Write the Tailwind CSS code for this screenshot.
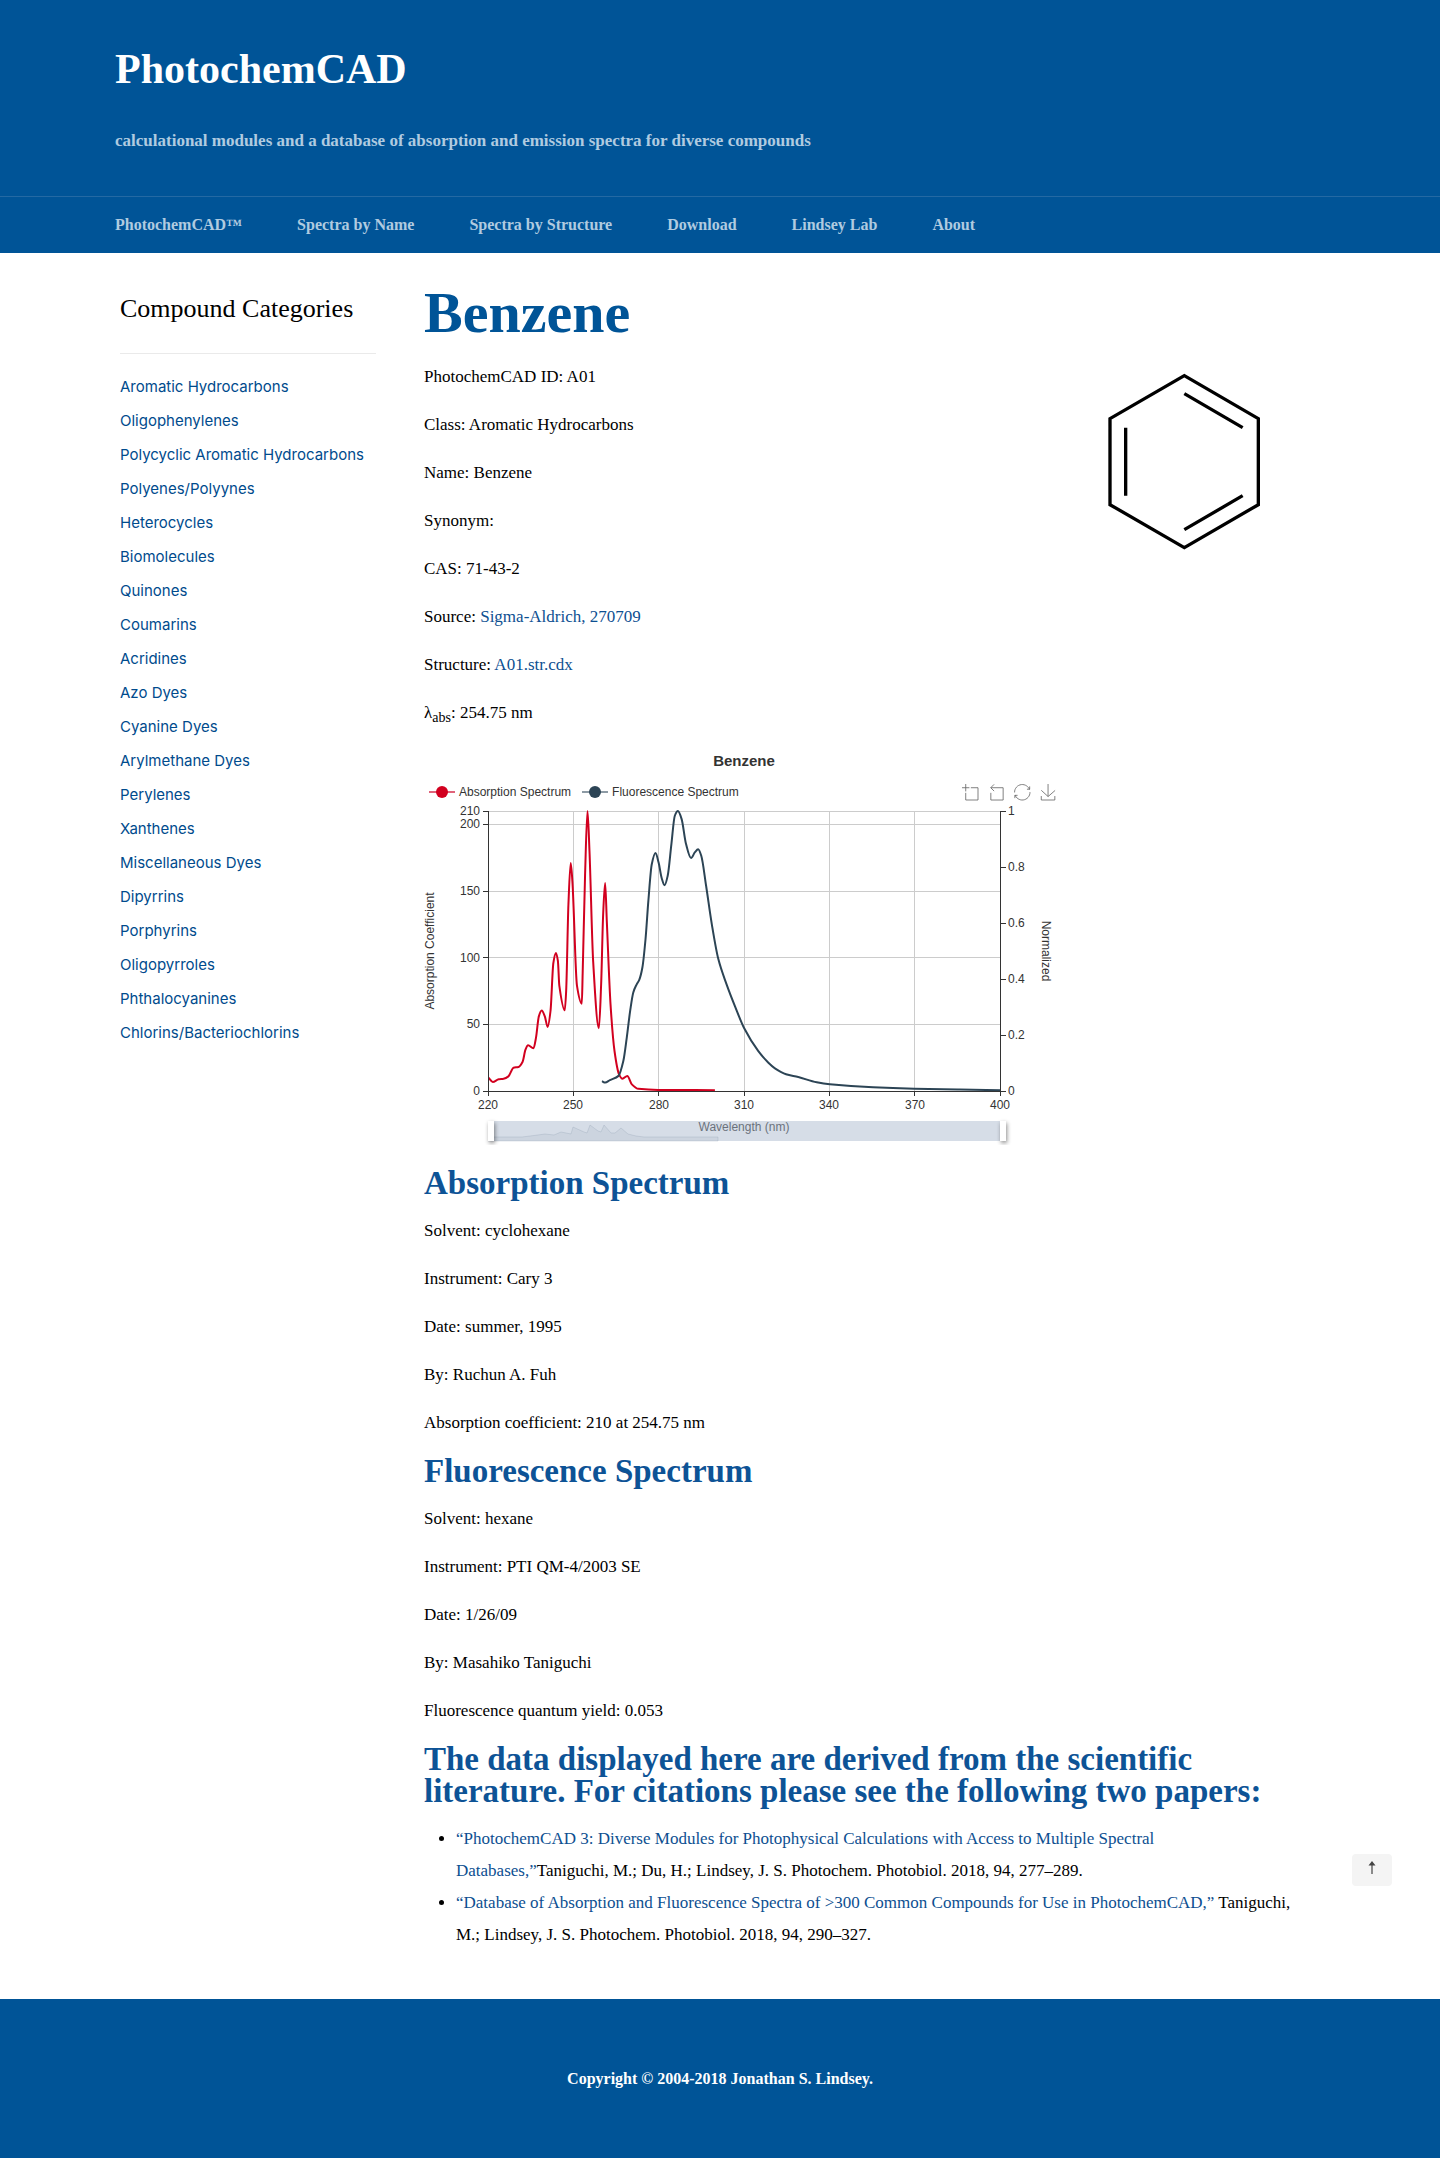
<!DOCTYPE html>
<html lang="en">
<head>
<meta charset="utf-8">
<meta name="viewport" content="width=device-width, initial-scale=1">
<title>Benzene | PhotochemCAD</title>
<script src="https://cdn.jsdelivr.net/npm/@tailwindcss/browser@4"></script>
</head>
<body class="bg-white font-['Liberation_Serif',serif] text-[17px] leading-8 text-black">

<header class="bg-[#005497]">
  <div class="mx-auto max-w-[1210px] pt-[45px] pb-[43px]">
    <a href="#" class="block text-[42px] leading-[48px] font-bold text-white">PhotochemCAD</a>
    <p class="mt-9 text-[17px] leading-6 font-bold text-[#b0cbe0]">calculational modules and a database of absorption and emission spectra for diverse compounds</p>
  </div>
  <nav class="border-t border-[#2469a3]">
    <div class="mx-auto flex max-w-[1210px] gap-[55px] text-base leading-[56px] font-bold text-[#b0cbe0]">
      <a href="#">PhotochemCAD™</a>
      <a href="#">Spectra by Name</a>
      <a href="#">Spectra by Structure</a>
      <a href="#">Download</a>
      <a href="#">Lindsey Lab</a>
      <a href="#">About</a>
    </div>
  </nav>
</header>

<div class="mx-auto flex max-w-[1210px] gap-12 pb-12">
  <aside class="w-[261px] shrink-0 pt-10 pl-[5px]">
    <h2 class="border-b border-[#eaeaea] pb-7 text-[26px] leading-8">Compound Categories</h2>
    <ul class="mt-4 font-[Inter,sans-serif] text-[15px] leading-[34px] whitespace-nowrap text-[#004b8d]">
      <li><a href="#">Aromatic Hydrocarbons</a></li>
      <li><a href="#">Oligophenylenes</a></li>
      <li><a href="#">Polycyclic Aromatic Hydrocarbons</a></li>
      <li><a href="#">Polyenes/Polyynes</a></li>
      <li><a href="#">Heterocycles</a></li>
      <li><a href="#">Biomolecules</a></li>
      <li><a href="#">Quinones</a></li>
      <li><a href="#">Coumarins</a></li>
      <li><a href="#">Acridines</a></li>
      <li><a href="#">Azo Dyes</a></li>
      <li><a href="#">Cyanine Dyes</a></li>
      <li><a href="#">Arylmethane Dyes</a></li>
      <li><a href="#">Perylenes</a></li>
      <li><a href="#">Xanthenes</a></li>
      <li><a href="#">Miscellaneous Dyes</a></li>
      <li><a href="#">Dipyrrins</a></li>
      <li><a href="#">Porphyrins</a></li>
      <li><a href="#">Oligopyrroles</a></li>
      <li><a href="#">Phthalocyanines</a></li>
      <li><a href="#">Chlorins/Bacteriochlorins</a></li>
    </ul>
  </aside>

  <main class="min-w-0 flex-1 pt-7">
    <h1 class="mb-4 text-[58px] leading-[64px] font-bold text-[#005497]">Benzene</h1>
    <div class="flex items-start justify-between">
      <div class="flex flex-col gap-4">
        <p>PhotochemCAD ID: A01</p>
        <p>Class: Aromatic Hydrocarbons</p>
        <p>Name: Benzene</p>
        <p>Synonym:</p>
        <p>CAS: 71-43-2</p>
        <p>Source: <a href="#" class="text-[#0d4f91]">Sigma-Aldrich, 270709</a></p>
        <p>Structure: <a href="#" class="text-[#0d4f91]">A01.str.cdx</a></p>
        <p>λ<sub class="text-sm">abs</sub>: 254.75 nm</p>
      </div>
      <svg class="mr-[45px]" width="200" height="210" viewBox="0 30 600 630" fill="none" stroke="#000" stroke-width="10" role="img" aria-label="Structure of benzene">
        <path d="M313 74L535 203V461L313 590L90 461V203ZM137 230V434M313 128L488 230M313 536L488 434"/>
      </svg>
    </div>

    <section class="mt-4 w-[640px] pb-[22px] font-['Liberation_Sans',sans-serif] text-xs text-[#333]">
      <h3 class="pt-[6px] text-center text-[15px] leading-5 font-bold">Benzene</h3>
      <div class="mt-[11px] flex h-5 items-center justify-between pr-2 pl-[5px] leading-5">
        <div class="flex gap-[11px]">
          <span class="flex items-center gap-1"><svg width="26" height="14" aria-hidden="true"><path d="M0 7H26" stroke="#e0637a" stroke-width="2"/><circle cx="13" cy="7" r="6" fill="#d2001f"/></svg>Absorption Spectrum</span>
          <span class="flex items-center gap-1"><svg width="26" height="14" aria-hidden="true"><path d="M0 7H26" stroke="#8d9ba5" stroke-width="2"/><circle cx="13" cy="7" r="6" fill="#2c4455"/></svg>Fluorescence Spectrum</span>
        </div>
        <div class="flex gap-[10px]">
          <button type="button" aria-label="Zoom"><svg class="overflow-visible" width="16" height="16" viewBox="0 0 58 58" fill="none" stroke="#666" stroke-width="3"><path d="M0,13.5h26.9 M13.5,26.9V0 M32.1,13.5H58V58H13.5 V32.1"/></svg></button>
          <button type="button" aria-label="Reset zoom"><svg class="overflow-visible" width="16" height="16" viewBox="0 0 58 58" fill="none" stroke="#666" stroke-width="3"><path d="M22,1.4L9.9,13.5l12.3,12.3 M10.3,13.5H54.9v44.6 H10.3v-26"/></svg></button>
          <button type="button" aria-label="Restore"><svg class="overflow-visible" width="16" height="16" viewBox="0 0 58 58" fill="none" stroke="#666" stroke-width="3"><path d="M47,18.9h9.8V8.7 M56.3,20.1 C52.1,9,40.5,0.6,26.8,2.1C12.6,3.7,1.6,16.2,2.1,30.6 M13,41.1H3.1v10.2 M3.7,39.9c4.2,11.1,15.8,19.5,29.5,18 c14.2-1.6,25.2-14.1,24.7-28.5"/></svg></button>
          <button type="button" aria-label="Save as image"><svg class="overflow-visible" width="16" height="16" viewBox="0 0 58 58" fill="none" stroke="#666" stroke-width="3"><path d="M4.7,22.9L29.3,45.5L54.7,23.4M4.6,43.6L4.6,58L53.8,58L53.8,43.6M29.2,45.1L29.2,0"/></svg></button>
        </div>
      </div>
      <svg class="block" width="640" height="343" viewBox="0 57 640 343" fill="#333" role="img" aria-label="Absorption and fluorescence spectra of benzene">
        <path d="M64 66.5H576M64 79.5H576M64 146.5H576M64 212.5H576M64 279.5H576M149.500 66V346M234.500 66V346M320.500 66V346M405.500 66V346M490.500 66V346" stroke="#ccc"/>
        <path id="absorption" fill="none" stroke="#d2001f" stroke-width="2" stroke-linejoin="round"/>
        <path id="fluorescence" fill="none" stroke="#2c4455" stroke-width="2" stroke-linejoin="round"/>
        <path d="M64.500 66V351M576.500 66V351M64 346.500H577M59 66.500H64M59 79.500H64M59 146.500H64M59 212.500H64M59 279.500H64M59 346.500H64M577 66.500H582M577 122.500H582M577 178.500H582M577 234.500H582M577 290.500H582M577 346.500H582M149.500 346V351M234.500 346V351M320.500 346V351M405.500 346V351M490.500 346V351" fill="none" stroke="#333"/>
        <g text-anchor="end">
          <text x="56" y="70">210</text><text x="56" y="83">200</text><text x="56" y="150">150</text><text x="56" y="217">100</text><text x="56" y="283">50</text><text x="56" y="350">0</text>
        </g>
        <g>
          <text x="584" y="70">1</text><text x="584" y="126">0.8</text><text x="584" y="182">0.6</text><text x="584" y="238">0.4</text><text x="584" y="294">0.2</text><text x="584" y="350">0</text>
        </g>
        <g text-anchor="middle">
          <text x="64" y="364">220</text><text x="149" y="364">250</text><text x="235" y="364">280</text><text x="320" y="364">310</text><text x="405" y="364">340</text><text x="491" y="364">370</text><text x="576" y="364">400</text>
          <text x="320" y="386">Wavelength (nm)</text>
          <text transform="translate(10 206) rotate(-90)">Absorption Coefficient</text>
          <text transform="translate(618 206) rotate(90)">Normalized</text>
        </g>
        <rect x="64" y="376" width="512" height="20" fill="#a7b7cc" fill-opacity=".47"/>
        <path d="M68 392H98L110 390.500L121 389L130 390L137 387L147 389L149 382L160 387L163 388L166 380L174 386L177 387L180 380L187 388L191 388L197 383L204 389L212 391L220 392H294V396H64Z" fill="#8391a6" fill-opacity=".12" stroke="#8391a6" stroke-opacity=".3" stroke-width=".8"/>
        <g fill="#fff" class="drop-shadow-[1px_2px_2px_rgba(0,0,0,0.45)]"><rect x="64" y="376" width="6" height="20"/><rect x="576" y="376" width="6" height="20"/></g>
      </svg>
    </section>

    <h2 class="mb-4 text-[33px] leading-8 font-bold text-[#0d5396]">Absorption Spectrum</h2>
    <div class="flex flex-col gap-4">
      <p>Solvent: cyclohexane</p>
      <p>Instrument: Cary 3</p>
      <p>Date: summer, 1995</p>
      <p>By: Ruchun A. Fuh</p>
      <p>Absorption coefficient: 210 at 254.75 nm</p>
    </div>

    <h2 class="my-4 text-[33px] leading-8 font-bold text-[#0d5396]">Fluorescence Spectrum</h2>
    <div class="flex flex-col gap-4">
      <p>Solvent: hexane</p>
      <p>Instrument: PTI QM-4/2003 SE</p>
      <p>Date: 1/26/09</p>
      <p>By: Masahiko Taniguchi</p>
      <p>Fluorescence quantum yield: 0.053</p>
    </div>

    <h2 class="my-4 text-[33px] leading-8 font-bold text-[#0d5396]">The data displayed here are derived from the scientific literature. For citations please see the following two papers:</h2>
    <ul class="list-disc pl-8">
      <li><a href="#" class="text-[#0d4f91]">“PhotochemCAD 3: Diverse Modules for Photophysical Calculations with Access to Multiple Spectral<br>Databases,”</a>Taniguchi, M.; Du, H.; Lindsey, J. S. Photochem. Photobiol. 2018, 94, 277–289.</li>
      <li><a href="#" class="text-[#0d4f91]">“Database of Absorption and Fluorescence Spectra of &gt;300 Common Compounds for Use in PhotochemCAD,”</a> Taniguchi,<br>M.; Lindsey, J. S. Photochem. Photobiol. 2018, 94, 290–327.</li>
    </ul>
  </main>
</div>

<footer class="bg-[#005497] py-16 text-center text-base leading-8 font-bold text-white">
  <p>Copyright © 2004-2018 Jonathan S. Lindsey.</p>
</footer>

<button type="button" aria-label="Back to top" class="fixed right-12 bottom-[272px] flex h-8 w-10 items-center justify-center rounded-sm bg-[#f4f4f4] pb-1">
  <svg width="8" height="14" viewBox="0 0 8 14" fill="#444" aria-hidden="true"><path d="M4 0L7.500 4.500H4.600V13H3.400V4.500H.5Z"/></svg>
</button>

<script>
// Wavelength (nm) and value pairs for each series
const absorption = [[220,10],[221.5,6.8],[223.6,8.8],[225.3,9.2],[227,11],[228.8,17.5],[230.5,18],[232,22],[233,31],[233.9,34.3],[235.8,32],[236.7,40],[237.7,56],[238.7,60.3],[239.8,56],[240.8,48],[241.8,60],[242.8,96],[243.7,103.5],[244.4,97.5],[244.9,79],[246.8,60.5],[247.3,75],[248.1,140],[248.9,171],[249.5,157],[251.1,79],[252.8,65.5],[253.1,88],[253.95,162],[254.8,210],[255.5,180],[256.8,97],[258.8,47],[259.6,80],[260.3,132],[261,156],[261.6,127],[262.9,65],[264.3,30],[265.9,12.5],[267.1,9.2],[268.8,11.3],[270.4,5],[272.7,1.6],[279.7,.8],[299.6,.6]];
const fluorescence = [[259.9,.035],[261,.03],[262.7,.039],[265.7,.054],[267.4,.107],[268.6,.19],[269.8,.286],[270.9,.352],[272.1,.381],[273,.397],[274.1,.441],[275.2,.542],[276.2,.679],[277.4,.81],[278.7,.85],[279.8,.816],[280.9,.76],[281.9,.735],[283,.769],[284.3,.882],[285.5,.983],[286.6,1],[287.9,.971],[289.4,.884],[291.2,.832],[292.6,.853],[293.7,.863],[294.8,.84],[296.5,.733],[298.5,.596],[300.8,.471],[303.7,.381],[306.7,.3015],[309.9,.224],[314.8,.143],[318.4,.101],[320.7,.081],[324.6,.06],[328.9,.05],[335.4,.031],[340,.0238],[355.2,.013],[369.7,.008],[385.7,.005],[400,.003]];

// Monotone cubic interpolation through the points
function curve(data, max) {
  const p = data.map(([nm, v]) => [64.5 + (nm - 220) * 512 / 180, 346 - v / max * 280]);
  const s = p.slice(1).map((b, i) => (b[1] - p[i][1]) / (b[0] - p[i][0]));
  const m = p.map((_, i) => {
    if (i === 0) return s[0];
    if (i === s.length) return s[i - 1];
    return s[i - 1] * s[i] <= 0 ? 0 : 2 * s[i - 1] * s[i] / (s[i - 1] + s[i]);
  });
  return p.map((b, i) => {
    if (i === 0) return `M${b}`;
    const a = p[i - 1], h = (b[0] - a[0]) / 3;
    return `C${a[0] + h},${a[1] + m[i - 1] * h} ${b[0] - h},${b[1] - m[i] * h} ${b}`;
  }).join('');
}
document.getElementById('absorption').setAttribute('d', curve(absorption, 210));
document.getElementById('fluorescence').setAttribute('d', curve(fluorescence, 1));
</script>
</body>
</html>
